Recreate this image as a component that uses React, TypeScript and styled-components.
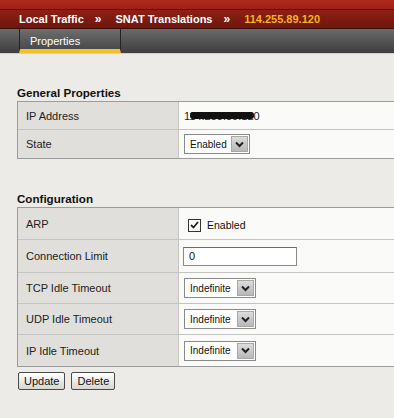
import styled, { createGlobalStyle } from "styled-components"

const GlobalStyle = createGlobalStyle`
  html, body {
    margin: 0;
    padding: 0;
    background: #ecebe7;
    overflow: hidden;
  }
  body {
    font-family: "Liberation Sans", Arial, sans-serif;
    font-size: 11px;
    color: #222;
  }
`

type Row = { label: string; height: number; value: React.ReactNode }

function Select({ text, width }: { text: string; width: number }) {
  return (
    <SelectBox $width={width}>
      <SelectText>{text}</SelectText>
      <SelectArrow>
        <svg width="9" height="7" viewBox="0 0 9 7">
          <path d="M1 1.5 L4.5 5 L8 1.5" fill="none" stroke="#222" strokeWidth="2" />
        </svg>
      </SelectArrow>
    </SelectBox>
  )
}

function PropTable({ rows }: { rows: Row[] }) {
  return (
    <Table>
      {rows.map((r, i) => (
        <TableRow key={r.label} $height={r.height} $first={i === 0}>
          <LabelCell>{r.label}</LabelCell>
          <ValueCell>{r.value}</ValueCell>
        </TableRow>
      ))}
    </Table>
  )
}

export default function App() {
  const generalRows: Row[] = [
    { label: "IP Address", height: 28, value: <Redacted>114.255.89.120</Redacted> },
    { label: "State", height: 29, value: <Select text="Enabled" width={66} /> },
  ]

  const configRows: Row[] = [
    {
      label: "ARP",
      height: 32,
      value: (
        <CheckLabel>
          <CheckBox>
            <svg width="9" height="8" viewBox="0 0 9 8">
              <path d="M1 4 L3.5 6.5 L8 1" fill="none" stroke="#222" strokeWidth="1.8" />
            </svg>
          </CheckBox>
          Enabled
        </CheckLabel>
      ),
    },
    { label: "Connection Limit", height: 33, value: <TextInput>0</TextInput> },
    { label: "TCP Idle Timeout", height: 31, value: <Select text="Indefinite" width={72} /> },
    { label: "UDP Idle Timeout", height: 31, value: <Select text="Indefinite" width={72} /> },
    { label: "IP Idle Timeout", height: 32, value: <Select text="Indefinite" width={72} /> },
  ]

  return (
    <>
      <GlobalStyle />
      <Page>
        <TopStrip />
        <Breadcrumb>
          <Crumb>Local Traffic</Crumb>
          <Sep>»</Sep>
          <Crumb>SNAT Translations</Crumb>
          <Sep>»</Sep>
          <Crumb $current>114.255.89.120</Crumb>
        </Breadcrumb>
        <TabBar>
          <Tab>Properties</Tab>
        </TabBar>
        <Content>
          <SectionTitle>General Properties</SectionTitle>
          <PropTable rows={generalRows} />
          <SectionTitle $gap>Configuration</SectionTitle>
          <PropTable rows={configRows} />
          <Actions>
            <Button>Update</Button>
            <Button>Delete</Button>
          </Actions>
        </Content>
      </Page>
    </>
  )
}

const Page = styled.div`
  width: 394px;
  height: 418px;
  overflow: hidden;
`

const TopStrip = styled.div`
  height: 9px;
  background: linear-gradient(#b02a1c, #9c2216);
  border-bottom: 1px solid #5e130b;
`

const Breadcrumb = styled.div`
  height: 18px;
  display: flex;
  align-items: center;
  padding-left: 19px;
  background: linear-gradient(#8e2014, #6e170e);
  border-bottom: 1px solid #3a0c07;
`

const Crumb = styled.span<{ $current?: boolean }>`
  font-weight: bold;
  font-size: 11px;
  color: ${p => (p.$current ? "#f5b21c" : "#ffffff")};
`

const Sep = styled.span`
  color: #fff;
  font-weight: bold;
  font-size: 12px;
  margin: 0 14px 0 11px;
`

const TabBar = styled.div`
  height: 24px;
  display: flex;
  padding-left: 19px;
  background: linear-gradient(#6a6a6a, #3e3e3e);
  border-bottom: 1px solid #cfcfcf;
`

const Tab = styled.div`
  width: 102px;
  box-sizing: border-box;
  border-left: 1px solid #222;
  border-right: 1px solid #222;
  border-bottom: 4px solid #f2c22e;
  padding: 6px 0 0 10px;
  color: #fff;
  font-size: 11px;
  background: linear-gradient(#6e6e6e, #4a4a4a);
`

const Content = styled.div`
  padding: 32px 0 0 17px;
`

const SectionTitle = styled.div<{ $gap?: boolean }>`
  font-weight: bold;
  font-size: 11.6px;
  color: #111;
  height: 15px;
  margin-top: ${p => (p.$gap ? "33px" : "0")};
`

const Table = styled.div`
  width: 400px;
  border: 1px solid #9c9c9c;
  border-right: none;
`

const TableRow = styled.div<{ $height: number; $first: boolean }>`
  display: grid;
  grid-template-columns: 161px 1fr;
  height: ${p => p.$height - 1}px;
  border-top: ${p => (p.$first ? "none" : "1px solid #c4c4c0")};
`

const LabelCell = styled.div`
  background: #e0dfdb;
  border-right: 1px solid #c4c4c0;
  display: flex;
  align-items: center;
  padding-left: 8px;
  color: #222;
`

const ValueCell = styled.div`
  background: #fafaf8;
  display: flex;
  align-items: center;
  padding-left: 5px;
`

const Redacted = styled.span`
  position: relative;
  color: #222;
  &::after {
    content: "";
    position: absolute;
    left: 6px;
    right: 6px;
    top: 2px;
    height: 7px;
    background: #111;
    border-radius: 3px;
  }
`

const SelectBox = styled.div<{ $width: number }>`
  width: ${p => p.$width}px;
  height: 20px;
  box-sizing: border-box;
  border: 1px solid #8a8a8a;
  background: #fff;
  display: flex;
  align-items: stretch;
`

const SelectText = styled.span`
  flex: 1;
  display: flex;
  align-items: center;
  padding-left: 5px;
  font-size: 10px;
  color: #111;
`

const SelectArrow = styled.span`
  width: 15px;
  margin: 1px;
  background: linear-gradient(#dcdcdc, #b8b8b8);
  border: 1px solid #a8a8a8;
  display: flex;
  align-items: center;
  justify-content: center;
`

const CheckLabel = styled.label`
  display: flex;
  align-items: center;
  gap: 6px;
  padding-left: 4px;
  margin-top: 3px;
  font-size: 10.5px;
  color: #111;
`

const CheckBox = styled.span`
  width: 13px;
  height: 13px;
  box-sizing: border-box;
  border: 1px solid #333;
  background: #fff;
  display: flex;
  align-items: center;
  justify-content: center;
`

const TextInput = styled.div`
  width: 114px;
  height: 19px;
  box-sizing: border-box;
  border: 1px solid #8a8a8a;
  border-top-color: #6a6a6a;
  background: #fff;
  display: flex;
  align-items: center;
  padding-left: 5px;
  margin-left: -1px;
  color: #111;
`

const Actions = styled.div`
  display: flex;
  gap: 6px;
  margin: 5px 0 0 1px;
`

const Button = styled.button`
  font-family: "Liberation Sans", Arial, sans-serif;
  font-size: 11px;
  color: #111;
  height: 18px;
  padding: 0 5px;
  border: 1px solid #4a4a4a;
  border-radius: 2px;
  background: linear-gradient(#ffffff, #d6d6d2);
`
